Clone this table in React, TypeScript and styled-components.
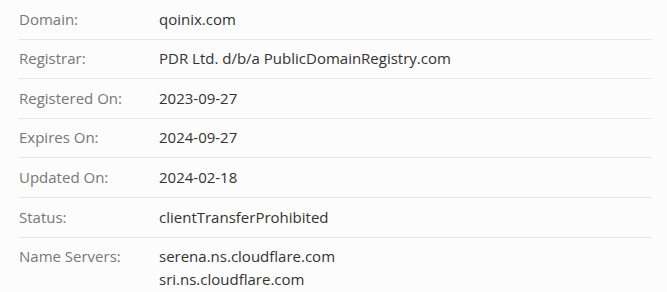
import styled, { createGlobalStyle } from "styled-components";

const GlobalStyle = createGlobalStyle`
  html, body {
    margin: 0;
    padding: 0;
    background: #fcfcfc;
  }
  body {
    font-family: "Open Sans", "Liberation Sans", sans-serif;
  }
`;

interface WhoisRow {
  label: string;
  values: string[];
}

const ROWS: WhoisRow[] = [
  { label: "Domain:", values: ["qoinix.com"] },
  { label: "Registrar:", values: ["PDR Ltd. d/b/a PublicDomainRegistry.com"] },
  { label: "Registered On:", values: ["2023-09-27"] },
  { label: "Expires On:", values: ["2024-09-27"] },
  { label: "Updated On:", values: ["2024-02-18"] },
  { label: "Status:", values: ["clientTransferProhibited"] },
  {
    label: "Name Servers:",
    values: ["serena.ns.cloudflare.com", "sri.ns.cloudflare.com"],
  },
];

export default function App() {
  return (
    <>
      <GlobalStyle />
      <Wrapper>
        <Table>
          {ROWS.map((row, i) => (
            <Row key={row.label} $last={i === ROWS.length - 1}>
              <Label>{row.label}</Label>
              <Value>
                {row.values.map((v) => (
                  <div key={v}>{v}</div>
                ))}
              </Value>
            </Row>
          ))}
        </Table>
      </Wrapper>
    </>
  );
}

const Wrapper = styled.div`
  width: 667px;
  height: 292px;
  overflow: hidden;
  padding: 0 15px 0 19px;
  box-sizing: border-box;
`;

const Table = styled.div`
  display: flex;
  flex-direction: column;
`;

const Row = styled.div<{ $last?: boolean }>`
  display: grid;
  grid-template-columns: 140px 1fr;
  padding: 7.6px 0 8.5px;
  font-size: 15px;
  line-height: 1.5;
  border-bottom: ${(p) => (p.$last ? "none" : "1px solid #e6e6e6")};
`;

const Label = styled.div`
  color: #777777;
`;

const Value = styled.div`
  color: #333333;
`;
